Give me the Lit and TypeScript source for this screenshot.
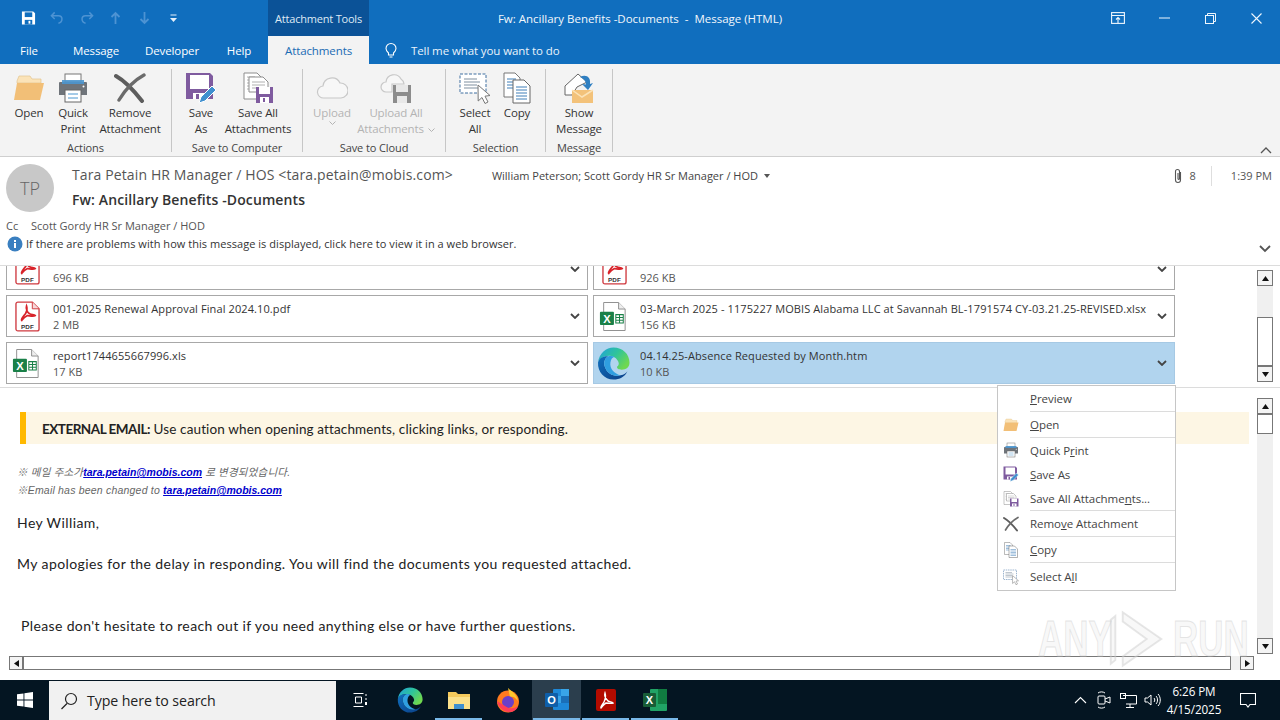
import { LitElement, html, css } from "lit";
import { customElement } from "lit/decorators.js";

const folder = (s: number) => html`<svg width=${s} height=${s} viewBox="0 0 32 32"><path d="M4 9 6 4h11l2 3h9v4H4z" fill="#fbe3b8" stroke="#e3c48f" stroke-width=".7"/><path d="M1 28 4 11h27l-4 17z" fill="#f2bf77"/></svg>`;
const printer = (s: number) => html`<svg width=${s} height=${s} viewBox="0 0 32 32"><rect x="8" y="2" width="16" height="8" fill="#fff" stroke="#777"/><path d="M3 10h26a1 1 0 0 1 1 1v12H2V11a1 1 0 0 1 1-1z" fill="#6f747a"/><rect x="5" y="8" width="22" height="4" fill="#4b96cf" opacity=".9"/><rect x="8" y="18" width="16" height="12" fill="#fff" stroke="#666"/><path d="M11 22h10M11 26h10" stroke="#4b96cf"/><circle cx="26.5" cy="14.5" r="1" fill="#fff"/></svg>`;
const cross = (s: number) => html`<svg width=${s} height=${s} viewBox="0 0 32 32"><path d="M2 4c9 5 19 16 26 25" stroke="#5d5d5d" stroke-width="4" fill="none" stroke-linecap="round"/><path d="M30 3C19 9 11 18 5 28" stroke="#6b6b6b" stroke-width="3.4" fill="none" stroke-linecap="round"/></svg>`;
const saveAs = (s: number) => html`<svg width=${s} height=${s} viewBox="0 0 32 32"><path d="M1 1h24l3 3v23H1z" fill="#7f5b9f"/><rect x="5" y="3" width="19" height="14" fill="#fff"/><rect x="8" y="21" width="12" height="6" fill="#fff"/><rect x="11" y="22" width="3" height="5" fill="#7f5b9f"/><path d="m14 31 2-6 11-11 4 4-11 11z" fill="#3f8fcf" stroke="#fff"/></svg>`;
const saveAll = (s: number) => html`<svg width=${s} height=${s} viewBox="0 0 32 32"><path d="M2 1h13l5 5v21H2z" fill="#fff" stroke="#8d8d8d"/><path d="M5 5h8M5 8h12M5 11h12M5 14h12M5 17h8" stroke="#b0b0b0"/><path d="M7 5h14l5 5v10H7z" fill="#fff" stroke="#8d8d8d"/><path d="M10 10h13M10 13h13M10 16h13" stroke="#b0b0b0"/><path d="M14 15h17v16H14z" fill="#7f5b9f"/><rect x="17" y="15" width="11" height="7" fill="#fff"/><rect x="18" y="25" width="9" height="6" fill="#fff"/><rect x="21" y="26" width="2" height="4" fill="#7f5b9f"/></svg>`;
const cloud = (s: number) => html`<svg width=${s} height=${s} viewBox="0 0 32 32"><path d="M8 26a6 6 0 0 1-1-12 9 9 0 0 1 17-3 7.500 7.500 0 0 1 1 15z" fill="#f7f7f7" stroke="#c8c8c8" stroke-width="1.2"/></svg>`;
const cloudSave = (s: number) => html`<svg width=${s} height=${s} viewBox="0 0 32 32"><path d="M6 20a5 5 0 0 1 0-10 8 8 0 0 1 15-3 6.500 6.500 0 0 1 3 5H12v8z" fill="#f7f7f7" stroke="#c8c8c8" stroke-width="1.200"/><path d="M13 13h18v18H13z" fill="#8c8c8c"/><rect x="16" y="13" width="12" height="7" fill="#e8e8e8"/><rect x="17" y="24" width="10" height="7" fill="#e8e8e8"/></svg>`;
const selectAll = (s: number) => html`<svg width=${s} height=${s} viewBox="0 0 32 32"><rect x="1" y="2" width="26" height="19" fill="#fff" stroke="#3f6fa0" stroke-dasharray="3 1.500"/><path d="M5 7h13M5 10h16M5 13h13M5 16h16" stroke="#7f8f9f"/><path d="m19 13 .2 16 3.800-3.500 3 6 3-1.500-3-5.800 5-.7z" fill="#fff" stroke="#777"/></svg>`;
const copy = (s: number) => html`<svg width=${s} height=${s} viewBox="0 0 32 32"><path d="M3 1h11l5 5v19H3z" fill="#fff" stroke="#777"/><path d="M6 7h9M6 10h9M6 13h9M6 16h7" stroke="#3f7fb8"/><path d="M12 8h11l6 6v17H12z" fill="#fff" stroke="#666"/><path d="M15 15h11M15 18h11M15 21h11M15 24h11M15 27h11" stroke="#3f7fb8"/></svg>`;
const showMsg = (s: number) => html`<svg width=${s} height=${s} viewBox="0 0 32 32"><path d="M2 14 15 2l9 8-10 5-5 8H2z" fill="#fff" stroke="#666"/><path d="M9 18h21v13H9z" fill="#f3c27a"/><path d="m9 18 10 7 11-7" fill="none" stroke="#fbe3b8" stroke-width="1.500"/><path d="M17 5c6-3 11 0 10 7l3-1-5 7-6-6 4 .5c0-3-2-6-6-7.500z" fill="#2f7fc1"/></svg>`;
const pdf = () => html`<svg width="25" height="31" viewBox="0 0 26 32"><path d="M3 1h15l7 7v21a2 2 0 0 1-2 2H3a2 2 0 0 1-2-2V3a2 2 0 0 1 2-2z" fill="#fff" stroke="#cf3a40" stroke-width="1.400"/><path d="M18 1v7h7" fill="#f6d7d8" stroke="#cf3a40"/><path d="M12 5c-1 3 1 7 3 8 2 1.500 5 .5 6 2-2 1.500-6 0-8 0-2 1-5 3-6 5-1-1 2-5 4-7 1-2 2-5 1-8z" fill="none" stroke="#d8232a" stroke-width="1.800"/><text x="13" y="28.500" text-anchor="middle" font-size="6.500" font-weight="700" font-family="Liberation Sans, sans-serif" fill="#333">PDF</text></svg>`;
const xls = () => html`<svg width="28" height="31" viewBox="0 0 30 32"><path d="M5 1h16l7 7v23H5z" fill="#fff" stroke="#8a8a8a"/><path d="M21 1v7h7" fill="#eee" stroke="#8a8a8a"/><rect x="1" y="11" width="15" height="14" rx="1" fill="#1a8048"/><text x="8.500" y="22.500" text-anchor="middle" font-size="12" font-weight="700" font-family="Liberation Sans, sans-serif" fill="#fff">X</text><path d="M18 14h8v9h-8zM18 17h8M18 20h8M22 14v9" fill="none" stroke="#1a8048" stroke-width="1.100"/></svg>`;
const edge = (s: number, id: string) => html`<svg width=${s} height=${s} viewBox="0 0 32 32"><defs><linearGradient id="${id}a" x1="0" y1="0" x2="1" y2=".6"><stop offset="0" stop-color="#1f9fe0"/><stop offset=".55" stop-color="#2fc49a"/><stop offset="1" stop-color="#6fd84f"/></linearGradient><linearGradient id="${id}b" x1="0" y1="0" x2="1" y2="1"><stop offset="0" stop-color="#0f6fbe"/><stop offset="1" stop-color="#0b3f86"/></linearGradient></defs><path d="M1 15C2 6 9 .5 16 .5 25 .5 31.500 7 31.500 15c0 5-3.500 7-7.500 7-3 0-5-1-4.500-3 1.500-1 2.500-3 .5-6-2-3-5-4.500-8-4.500C6 8.500 2 12 1 15z" fill="url(#${id}a)"/><path d="M1 15c1-4 5-6.500 10-6 -4 2-5 7-3 11 2 6 9 9 15 7.500 3-.5 5.500-2.500 6.500-4C27 29 22 31.500 16 31.500 7 31.500.5 24 1 15z" fill="url(#${id}b)"/><path d="M11 9c-4 2-5 7-3 11 2 6 9 9 15 7.500-6-1.500-11-6.500-10-12.500.5-3 2-5 4-5.500-2-1-4-1-6-.5z" fill="#2f9ee0"/></svg>`;
const chev = () => html`<svg class="chev" width="10" height="6" viewBox="0 0 10 6"><path d="M1 1l4 4 4-4" fill="none" stroke="#444" stroke-width="1.800"/></svg>`;
const tinyChev = () => html`<svg class="tc" width="7" height="4" viewBox="0 0 7 4"><path d="m.5.5 3 3 3-3" fill="none" stroke="#b3b3b3"/></svg>`;
const arrow = (d: string) => html`<svg width="9" height="9" viewBox="0 0 9 9"><path d=${d} fill="#111"/></svg>`;

const files = [
  { n: "", s: "696 KB", i: "pdf" }, { n: "", s: "926 KB", i: "pdf" },
  { n: "001-2025 Renewal Approval Final 2024.10.pdf", s: "2 MB", i: "pdf" },
  { n: "03-March 2025 - 1175227 MOBIS Alabama LLC at Savannah BL-1791574 CY-03.21.25-REVISED.xlsx", s: "156 KB", i: "xls" },
  { n: "report1744655667996.xls", s: "17 KB", i: "xls" },
  { n: "04.14.25-Absence Requested by Month.htm", s: "10 KB", i: "edge", sel: true },
];

@customElement("app-root")
export class AppRoot extends LitElement {
  static styles = css`
    :host { display: block; width: 1280px; height: 720px; position: relative; overflow: hidden; background: #fff;
      font-family: "Open Sans", "Noto Sans", sans-serif; font-size: 12px; color: #333; }
    .title { height: 36px; background: #106ebe; display: flex; align-items: center; color: #fff; position: relative; }
    .qat { width: 268px; display: flex; align-items: center; padding-left: 21px; gap: 14px; box-sizing: border-box; }
    .qat svg { display: block; width: 15px; }
    .tool { width: 101px; height: 36px; background: #0b5297; display: flex; align-items: center; justify-content: center; font-size: 11px; color: #dfeaf5; letter-spacing: -.2px; }
    .wintitle { width: 540px; text-align: center; font-size: 11.5px; color: #f2f7fc; margin-left: 1px; letter-spacing: -.01px; }
    .winbtns { margin-left: auto; display: flex; align-items: center; padding-right: 1px; }
    .winbtns span { width: 46px; display: flex; justify-content: center; }
    .tabs { height: 28px; background: #106ebe; display: flex; align-items: center; color: #fff; font-size: 11.500px; letter-spacing: -.1px; }
    .tabs > * { flex: none; }
    .t-file { width: 58px; text-align: center; }
    .t-msg { width: 76px; text-align: center; }
    .t-dev { width: 76px; text-align: center; }
    .t-help { width: 58px; text-align: center; box-sizing: border-box; }
    .t-act { width: 101px; height: 28px; background: #f3f3f3; color: #1a6bb3; display: flex; align-items: center; justify-content: center; }
    .t-tell { margin-left: 15px; display: flex; align-items: center; gap: 13px; color: #eaf3fb; }
    .ribbon { height: 93px; background: #f3f3f3; border-bottom: 1px solid #cfcfcf; box-sizing: border-box; display: flex; position: relative; }
    .grp { display: flex; flex-direction: column; border-right: 1px solid #c6c6c6; margin: 5px 0 4px; box-sizing: border-box; height: 83px; }
    .btns { display: grid; height: 68px; }
    .btn { display: flex; flex-direction: column; align-items: center; text-align: center; font-size: 11.500px; line-height: 16px; color: #333; letter-spacing: -.15px; white-space: nowrap; }
    .btn .ic { height: 35px; display: flex; align-items: center; justify-content: center; margin-top: 1px; }
    .btn.off { color: #b3b3b3; }
    .btn .tc { vertical-align: middle; }
    .btn .tc.after { margin-left: 4px; }
    .glabel { text-align: center; font-size: 11px; line-height: 14px; color: #444; margin-top: 4px; letter-spacing: -.1px; white-space: nowrap; }
    .g1 { width: 172px; } .g1 .btns { grid-template-columns: 46px 42px 72px; padding-left: 6px; }
    .g2 { width: 131px; } .g2 .btns { grid-template-columns: 38px 76px; padding-left: 10px; }
    .g3 { width: 143px; } .g3 .btns { grid-template-columns: 38px 90px; padding-left: 10px; }
    .g4 { width: 100px; } .g4 .btns { grid-template-columns: 38px 46px; padding-left: 10px; }
    .g5 { width: 67px; } .g5 .btns { grid-template-columns: 54px; padding-left: 6px; }
    .collapse { position: absolute; right: 8px; bottom: 2px; }
    .hdr { height: 109px; border-bottom: 1px solid #dcdcdc; box-sizing: border-box; padding: 0 8px 0 6px; display: flex; flex-direction: column; }
    .h-top { height: 58px; display: flex; }
    .avatar { width: 48px; height: 48px; border-radius: 50%; background: #c8c8c8; margin-top: 7px; display: flex; align-items: center; justify-content: center; font-size: 18px; font-weight: 300; color: #666; flex: none; }
    .h-main { flex: 1; margin-left: 18px; display: flex; flex-direction: column; }
    .h-l1 { display: flex; align-items: center; height: 34px; }
    .name { font-size: 14px; color: #555; letter-spacing: .12px; white-space: nowrap; }
    .rcp { font-size: 11px; color: #444; margin-left: 39px; white-space: nowrap; margin-top: 3px; }
    .caret { margin-left: 6px; margin-top: 3px; width: 0; height: 0; border: 3px solid transparent; border-top: 4px solid #555; border-bottom: 0; }
    .cnt { margin-left: auto; display: flex; align-items: center; font-size: 11px; color: #555; margin-top: 3px; }
    .cnt svg { margin-right: 7px; }
    .div { width: 1px; height: 20px; background: #dedede; margin: 0 19px 0 15px; }
    .subj { font-size: 14px; font-weight: 600; color: #333; line-height: 18px; letter-spacing: .11px; }
    .h-cc { height: 20px; display: flex; align-items: center; font-size: 11px; color: #555; }
    .h-cc span:first-child { width: 25px; }
    .h-info { height: 17px; display: flex; align-items: center; font-size: 11px; color: #333; letter-spacing: .04px; }
    .h-info svg:first-child { margin: 0 3px 0 1px; }
    .h-info .more { margin-left: auto; margin-top: 10px; margin-right: 1px; }
    .att { height: 122px; border-bottom: 1px solid #dcdcdc; box-sizing: border-box; display: flex; overflow: hidden; }
    .agrid { width: 1169px; flex: none; margin: -18px 0 0 6px; display: grid; grid-template-columns: 582px 582px; grid-auto-rows: 42px; gap: 5px; height: max-content; }
    .card { border: 1px solid #a8a8a8; background: #fff; box-sizing: border-box; display: flex; align-items: center; font-size: 11px; line-height: 16px; color: #333; letter-spacing: .1px; }
    .card.sel { background: #b1d4ee; border-color: #a6c9e4; }
    .card .fi { width: 46px; flex: none; display: flex; box-sizing: border-box; }
    .fi.pdf { padding-left: 8px; } .fi.xls { padding-left: 5px; } .fi.edge { padding-left: 3px; }
    .card .tx { flex: 1; min-width: 0; padding-top: 1px; }
    .card .nm { white-space: nowrap; overflow: hidden; }
    .card .sz { color: #555; letter-spacing: 0; }
    .card .chev { flex: none; margin: 0 7px; }
    .vsb { width: 16px; display: flex; flex-direction: column; background: #f0f0f0; flex: none; }
    .sbtn { width: 14px; height: 14px; border: 1px solid #777; background: #f4f4f4; display: flex; align-items: center; justify-content: center; flex: none; }
    .att .vsb { margin: 4px 0 4px 82px; height: 112px; }
    .thumb { width: 14px; border: 1px solid #777; background: #fff; }
    .att .thumb { height: 50px; margin-top: 31px; }
    .grow { flex: 1; }
    .body { height: 292px; display: flex; flex-direction: column; }
    .b-main { height: 268px; display: flex; }
    .b-text { width: 1257px; flex: none; overflow: hidden; }
    .b-main .vsb { margin-top: 10px; height: 256px; }
    .b-main .thumb { height: 18px; }
    .banner { margin: 24px 8px 0 20px; height: 32px; background: #fdf6e4; border-left: 6px solid #ffb900; display: flex; align-items: center; padding: 2px 0 0 16px; box-sizing: border-box; font-family: "Lato", sans-serif; font-size: 13.500px; color: #222; white-space: nowrap; letter-spacing: .13px; }
    .banner b { font-weight: 700; letter-spacing: -.5px; }
    .ko { margin: 19px 0 0 17px; font: italic 10.500px/18px "Liberation Sans", "Noto Sans CJK KR", sans-serif; color: #666; letter-spacing: .2px; }
    .ko a { color: #0000cc; text-decoration: underline; font-weight: 700; letter-spacing: 0; }
    .para { font-family: "Lato", sans-serif; font-size: 14px; color: #222; white-space: nowrap; line-height: 18px; margin-left: 17px; letter-spacing: .41px; }
    .p1 { margin-top: 15px; } .p2 { margin-top: 23px; } .p3 { margin-top: 44px; margin-left: 21px; letter-spacing: .37px; }
    .hsb { height: 14px; display: flex; align-items: center; padding-left: 9px; }
    .hsb .sbtn { width: 12px; height: 12px; }
    .hthumb { width: 1206px; height: 12px; border: 1px solid #777; background: #fff; }
    .hsb-track { width: 9px; height: 14px; background: #f0f0f0; }
    .task { height: 40px; background: #041522; position: absolute; left: 0; right: 0; bottom: 0; display: flex; align-items: center; color: #fff; }
    .start { width: 49px; display: flex; justify-content: center; }
    .search { width: 287px; height: 39px; margin-top: 1px; background: #f1f1f1; display: flex; align-items: center; color: #222; font-size: 14.200px; padding-left: 11px; box-sizing: border-box; gap: 9px; letter-spacing: -.1px; }
    .tb { width: 49px; height: 40px; display: flex; align-items: center; justify-content: center; position: relative; flex: none; }
    .tb.on { background: #2b3e4d; }
    .tb.open::after { content: ""; position: absolute; left: 1px; right: 1px; bottom: 0; height: 2px; background: #79b8e8; }
    .tray { margin-left: auto; display: flex; align-items: center; padding-right: 8px; }
    .tray .ti { width: 24px; display: flex; justify-content: center; }
    .clock { text-align: center; font-size: 11.700px; line-height: 18px; width: 60px; letter-spacing: -.1px; white-space: nowrap; }
    .notif { width: 48px; display: flex; justify-content: center; }
    .menu { position: absolute; left: 997px; top: 385px; width: 179px; background: #fff; border: 1px solid #c6c6c6; box-sizing: border-box; z-index: 3; }
    .mi { display: flex; align-items: stretch; font-size: 11.500px; color: #444; letter-spacing: -.05px; }
    .mi .mic { width: 32px; flex: none; display: flex; align-items: center; justify-content: center; padding-right: 7px; box-sizing: border-box; }
    .mi .mt { flex: 1; display: flex; align-items: center; }
    .mi.s .mt { border-bottom: 1px solid #dcdcdc; }
    .mi.h26 { height: 26px; } .mi.h24 { height: 24px; } .mi.h25 { height: 25px; } .mi.h27 { height: 27px; }
    .mi u { text-underline-offset: 1px; }
    .wm { position: absolute; left: 1038px; top: 608px; width: 200px; height: 62px; z-index: 2; pointer-events: none; display: flex; align-items: center; }
    .wm span { font: 700 50px/1 "Liberation Sans", sans-serif; color: rgba(215,215,215,.18); -webkit-text-stroke: 1px rgba(205,205,205,.5); transform-origin: left center; transform: scaleX(.7); display: block; white-space: nowrap; width: 62px; }
    .wm svg { flex: none; margin: 0 8px 0 8px; }
  `;

  private rb(label: unknown, icon: unknown, off = false) {
    return html`<div class="btn ${off ? "off" : ""}"><div class="ic">${icon}</div>${label}</div>`;
  }

  private card(f: any) {
    const ic = f.i === "pdf" ? pdf() : f.i === "xls" ? xls() : edge(33, "ed1");
    return html`<div class="card ${f.sel ? "sel" : ""}"><div class="fi ${f.i}">${ic}</div><div class="tx"><div class="nm">${f.n || "\u00a0"}</div><div class="sz">${f.s}</div></div>${chev()}</div>`;
  }

  private mi(cls: string, icon: unknown, label: unknown) {
    return html`<div class="mi ${cls}"><div class="mic">${icon ?? ""}</div><div class="mt"><span>${label}</span></div></div>`;
  }

  render() {
    return html`
      <div class="title">
        <div class="qat">
          <svg width="16" height="16" viewBox="0 0 16 16"><path d="M1 1h12l2 2v12H1z" fill="#fff"/><rect x="4" y="2" width="8" height="5" fill="#106ebe"/><rect x="4" y="10" width="8" height="5" fill="#106ebe"/><rect x="8" y="11" width="2" height="3" fill="#fff"/></svg>
          <svg width="16" height="14" viewBox="0 0 16 14" fill="none" stroke="#4d93d3" stroke-width="1.600"><path d="M5 1 1.500 4.500 5 8M2 4.500h7c5 0 5 7 0 8"/></svg>
          <svg width="16" height="14" viewBox="0 0 16 14" fill="none" stroke="#4d93d3" stroke-width="1.600"><path d="m11 1 3.500 3.500L11 8M14 4.500H7c-5 0-5 7 0 8"/></svg>
          <svg width="14" height="14" viewBox="0 0 14 14" fill="none" stroke="#4d93d3" stroke-width="1.800"><path d="M7 13V2M3 6l4-4 4 4"/></svg>
          <svg width="14" height="14" viewBox="0 0 14 14" fill="none" stroke="#4d93d3" stroke-width="1.800"><path d="M7 1v11M3 8l4 4 4-4"/></svg>
          <svg width="10" height="10" viewBox="0 0 10 10"><path d="M2 1.500h6v1H2zM1.500 5h7L5 9z" fill="#e6f0fa"/></svg>
        </div>
        <div class="tool">Attachment Tools</div>
        <div class="wintitle">Fw: Ancillary Benefits -Documents&nbsp; -&nbsp; Message (HTML)</div>
        <div class="winbtns">
          <span><svg width="14" height="12" viewBox="0 0 14 12" fill="none" stroke="#eef6fd" stroke-width="1.100"><rect x=".6" y=".6" width="12.800" height="10.800"/><path d="M.6 3.500h12.800M7 11V5.500M5 7.500l2-2 2 2"/></svg></span>
          <span><svg width="11" height="2" viewBox="0 0 11 2"><path d="M0 1h11" stroke="#eef6fd"/></svg></span>
          <span><svg width="11" height="11" viewBox="0 0 11 11" fill="none" stroke="#eef6fd"><rect x=".5" y="2.500" width="8" height="8"/><path d="M2.500 2.500V.5h8v8h-2"/></svg></span>
          <span><svg width="11" height="11" viewBox="0 0 11 11" fill="none" stroke="#eef6fd" stroke-width="1.100"><path d="m.5.500 10 10M10.500.5l-10 10"/></svg></span>
        </div>
      </div>
      <div class="tabs">
        <div class="t-file">File</div><div class="t-msg">Message</div><div class="t-dev">Developer</div><div class="t-help">Help</div>
        <div class="t-act">Attachments</div>
        <div class="t-tell"><svg width="14" height="16" viewBox="0 0 14 16" fill="none" stroke="#fff" stroke-width="1.100"><path d="M4.500 11C3 9.500 2 8.500 2 6.500a5 5 0 0 1 10 0c0 2-1 3-2.500 4.500v2h-5zM5.500 15h3"/></svg>Tell me what you want to do</div>
      </div>
      <div class="ribbon">
        <div class="grp g1"><div class="btns">${this.rb("Open", folder(32))}${this.rb(html`Quick<br>Print`, printer(32))}${this.rb(html`Remove<br>Attachment`, cross(32))}</div><div class="glabel">Actions</div></div>
        <div class="grp g2"><div class="btns">${this.rb(html`Save<br>As`, saveAs(32))}${this.rb(html`Save All<br>Attachments`, saveAll(32))}</div><div class="glabel">Save to Computer</div></div>
        <div class="grp g3"><div class="btns">${this.rb(html`Upload<br>${tinyChev()}`, cloud(32), true)}${this.rb(html`Upload All<br><span>Attachments<svg class="tc after" width="7" height="4" viewBox="0 0 7 4"><path d="m.5.5 3 3 3-3" fill="none" stroke="#b3b3b3"/></svg></span>`, cloudSave(32), true)}</div><div class="glabel">Save to Cloud</div></div>
        <div class="grp g4"><div class="btns">${this.rb(html`Select<br>All`, selectAll(32))}${this.rb("Copy", copy(32))}</div><div class="glabel">Selection</div></div>
        <div class="grp g5"><div class="btns">${this.rb(html`Show<br>Message`, showMsg(32))}</div><div class="glabel">Message</div></div>
        <svg class="collapse" width="12" height="7" viewBox="0 0 12 7"><path d="m1 6 5-5 5 5" fill="none" stroke="#555" stroke-width="1.300"/></svg>
      </div>
      <div class="hdr">
        <div class="h-top">
          <div class="avatar">TP</div>
          <div class="h-main">
            <div class="h-l1">
              <span class="name">Tara Petain HR Manager / HOS &lt;tara.petain@mobis.com&gt;</span>
              <span class="rcp">William Peterson; Scott Gordy HR Sr Manager / HOD</span><span class="caret"></span>
              <span class="cnt"><svg width="10" height="16" viewBox="0 0 10 16" fill="none" stroke="#555" stroke-width="1.100"><path d="M7.500 4v8a2.500 2.500 0 0 1-5 0V3.500a2 2 0 0 1 4 0V11a1 1 0 0 1-1.500 0V5"/></svg>8<span class="div"></span>1:39 PM</span>
            </div>
            <div class="subj">Fw: Ancillary Benefits -Documents</div>
          </div>
        </div>
        <div class="h-cc"><span>Cc</span><span>Scott Gordy HR Sr Manager / HOD</span></div>
        <div class="h-info">
          <svg width="16" height="16" viewBox="0 0 16 16"><circle cx="8" cy="8" r="7.500" fill="#3a7fc0"/><rect x="7" y="7" width="2" height="5" fill="#fff"/><rect x="7" y="4" width="2" height="2" fill="#fff"/></svg>
          <span>If there are problems with how this message is displayed, click here to view it in a web browser.</span>
          <svg class="more" width="12" height="8" viewBox="0 0 12 8"><path d="m1 1 5 5 5-5" fill="none" stroke="#555" stroke-width="1.800"/></svg>
        </div>
      </div>
      <div class="att">
        <div class="agrid">${files.map((f) => this.card(f))}</div>
        <div class="vsb"><div class="sbtn">${arrow("M4.500 2 8 7H1z")}</div><div class="thumb"></div><div class="grow"></div><div class="sbtn">${arrow("M1 2h7L4.500 7z")}</div></div>
      </div>
      <div class="body">
        <div class="b-main">
          <div class="b-text">
            <div class="banner"><span><b>EXTERNAL EMAIL:</b> Use caution when opening attachments, clicking links, or responding.</span></div>
            <div class="ko">※ 메일 주소가<a>tara.petain@mobis.com</a> 로 변경되었습니다.<br>※Email has been changed to <a>tara.petain@mobis.com</a></div>
            <div class="para p1">Hey William,</div>
            <div class="para p2">My apologies for the delay in responding. You will find the documents you requested attached.</div>
            <div class="para p3">Please don't hesitate to reach out if you need anything else or have further questions.</div>
          </div>
          <div class="vsb"><div class="sbtn">${arrow("M4.500 2 8 7H1z")}</div><div class="thumb"></div><div class="grow"></div><div class="sbtn">${arrow("M1 2h7L4.500 7z")}</div></div>
        </div>
        <div class="hsb"><div class="sbtn">${arrow("M2 4.500 7 1v7z")}</div><div class="hthumb"></div><div class="hsb-track"></div><div class="sbtn">${arrow("M2 1l5 3.500L2 8z")}</div></div>
      </div>
      <div class="menu">
        ${this.mi("s h26", null, html`<u>P</u>review`)}
        ${this.mi("s h26", folder(16), html`<u>O</u>pen`)}
        ${this.mi("h24", printer(16), html`Quick P<u>r</u>int`)}
        ${this.mi("h24", saveAs(16), html`<u>S</u>ave As`)}
        ${this.mi("s h25", saveAll(16), html`Save All Attachme<u>n</u>ts...`)}
        ${this.mi("s h26", cross(16), html`Remo<u>v</u>e Attachment`)}
        ${this.mi("s h26", copy(16), html`<u>C</u>opy`)}
        ${this.mi("h27", selectAll(16), html`Select A<u>l</u>l`)}
      </div>
      <div class="wm"><span>ANY</span><svg width="57" height="62" viewBox="0 0 62 66" fill="rgba(215,215,215,.18)" stroke="rgba(205,205,205,.5)" stroke-width="2"><path d="M3 12 8 8v48l-5 4zM16 4l42 29-42 29V52l26-19-26-19z"/></svg><span>RUN</span></div>
      <div class="task">
        <div class="start"><svg width="16" height="16" viewBox="0 0 16 16" fill="#fff"><path d="M0 2.300 6.500 1.400V7.500H0zM7.400 1.300 16 0v7.500H7.400zM0 8.500h6.500v6.100L0 13.700zM7.400 8.500H16V16l-8.600-1.300z"/></svg></div>
        <div class="search"><svg width="18" height="18" viewBox="0 0 18 18" fill="none" stroke="#222" stroke-width="1.200"><circle cx="11" cy="7" r="5.500"/><path d="M7 11.500 1.500 17"/></svg>Type here to search</div>
        <div class="tb"><svg width="16" height="16" viewBox="0 0 16 16" fill="none" stroke="#fff"><path d="M.5 1.500h10M2.500 5h6v6h-6zM.5 14.500h10M13 2v2M13 6v2"/><path d="M13 10v3" stroke-width="2"/></svg></div>
        <div class="tb">${edge(26, "ed2")}</div>
        <div class="tb open"><svg width="24" height="22" viewBox="0 0 24 22"><path d="M1 3h8l2 2h12v15H1z" fill="#f4c95c"/><rect x="1" y="8" width="22" height="12" fill="#fbe08a"/><rect x="7" y="15" width="10" height="5" fill="#3f8fcf"/></svg></div>
        <div class="tb"><svg width="26" height="26" viewBox="0 0 26 26"><circle cx="13" cy="14.500" r="11" fill="#ff7a1f"/><path d="M13 1c3 3 9 6 10 13-3-4-5-5-8-4z" fill="#ffc72c"/><circle cx="13" cy="15" r="6" fill="#6b3fc9"/><path d="M2 14c1 6 6 11 12 11 4 0 8-2 9-6-4 3-9 3-13 0z" fill="#ff3d55"/></svg></div>
        <div class="tb on open"><svg width="26" height="24" viewBox="0 0 26 24"><rect x="9" y="1" width="16" height="21" rx="1" fill="#1e88d8"/><path d="M17 1h8v7h-8zM9 8h8v7H9z" fill="#39a5e8"/><path d="M17 8h8v7h-8z" fill="#1a6fb8"/><rect x="1" y="5" width="13" height="14" rx="1" fill="#0f5ea8"/><text x="7.500" y="16" text-anchor="middle" font-size="11" font-weight="700" font-family="Liberation Sans, sans-serif" fill="#fff">O</text></svg></div>
        <div class="tb open"><svg width="22" height="24" viewBox="0 0 22 24"><rect x="1" y="1" width="20" height="22" rx="2" fill="#b30b00"/><path d="M10 5c-1 3 1 6 3 8 2 1 4 1 5 2-2 1-5 0-7 0-2 1-3 3-5 5-1-1 2-4 3-6 1-2 2-6 1-9z" fill="none" stroke="#fff" stroke-width="1.400"/></svg></div>
        <div class="tb open"><svg width="26" height="24" viewBox="0 0 26 24"><rect x="8" y="1" width="17" height="22" rx="1" fill="#21a366"/><path d="M16 1h9v7h-9zM16 8h9v8h-9z" fill="#107c41"/><rect x="1" y="5" width="13" height="14" rx="1" fill="#185c37"/><text x="7.500" y="16" text-anchor="middle" font-size="11" font-weight="700" font-family="Liberation Sans, sans-serif" fill="#fff">X</text></svg></div>
        <div class="tray">
          <span class="ti"><svg width="13" height="8" viewBox="0 0 13 8" fill="none" stroke="#fff" stroke-width="1.100"><path d="m1 7 5.500-5.500L12 7"/></svg></span>
          <span class="ti"><svg width="16" height="18" viewBox="0 0 16 18" fill="none" stroke="#fff"><rect x="2" y="5" width="7" height="8" rx="1"/><path d="m9 8 5-2v6l-5-2M2 2c2-1.500 5-1.500 7 0M2 16c2 1.500 5 1.500 7 0"/></svg></span>
          <span class="ti"><svg width="17" height="15" viewBox="0 0 17 15" fill="none" stroke="#fff"><path d="M3 2.500h13.500V11H6M10 11v3M6 14.500h8"/><rect x=".5" y=".5" width="5" height="5"/></svg></span>
          <span class="ti"><svg width="17" height="14" viewBox="0 0 17 14" fill="none" stroke="#fff"><path d="M1 5v4h2.500L7 12V2L3.500 5zM10 5c1 1 1 3 0 4M12 3c2 2 2 6 0 8M14 1c3 3 3 9 0 12"/></svg></span>
          <div class="clock">6:26 PM<br>4/15/2025</div>
          <span class="notif"><svg width="16" height="15" viewBox="0 0 16 15" fill="none" stroke="#fff" stroke-width="1.100"><path d="M.5.500h15v11h-5.500L8 14l-2-2.500H.5z"/></svg></span>
        </div>
      </div>
    `;
  }
}
